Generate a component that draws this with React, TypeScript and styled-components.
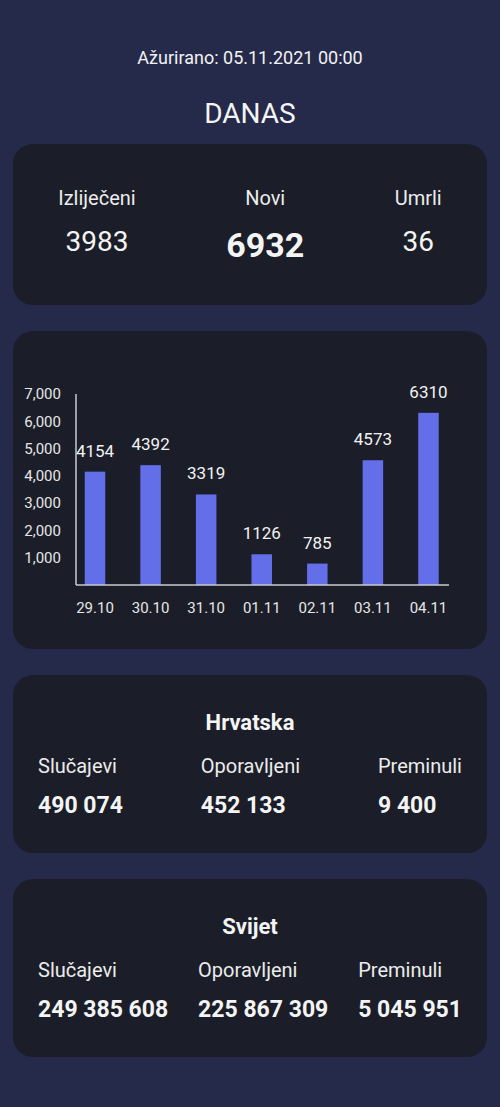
import React from "react";
import styled, { createGlobalStyle } from "styled-components";

const GlobalStyle = createGlobalStyle`
  html, body {
    margin: 0;
    padding: 0;
    background: #262a4a;
  }
  body {
    font-family: Roboto, "Noto Sans", "Liberation Sans", sans-serif;
    color: #f2f2f2;
  }
`;

const daily = [
  { date: "29.10", value: 4154 },
  { date: "30.10", value: 4392 },
  { date: "31.10", value: 3319 },
  { date: "01.11", value: 1126 },
  { date: "02.11", value: 785 },
  { date: "03.11", value: 4573 },
  { date: "04.11", value: 6310 },
];

const ticks = [1000, 2000, 3000, 4000, 5000, 6000, 7000];

const App: React.FC = () => {
  return (
    <>
      <GlobalStyle />
      <Page>
        <Updated>Ažurirano: 05.11.2021 00:00</Updated>
        <Heading>DANAS</Heading>
        <Cards>
          <Card $padding="43px 0 39px">
            <StatRow $justify="space-around">
              <StatColumn $align="center">
                <TodayLabel>Izliječeni</TodayLabel>
                <TodayValue>3983</TodayValue>
              </StatColumn>
              <StatColumn $align="center">
                <TodayLabel>Novi</TodayLabel>
                <TodayValue $big>6932</TodayValue>
              </StatColumn>
              <StatColumn $align="center">
                <TodayLabel>Umrli</TodayLabel>
                <TodayValue>36</TodayValue>
              </StatColumn>
            </StatRow>
          </Card>

          <Card $padding="0">
            <DailyChart />
          </Card>

          <TotalsCard
            title="Hrvatska"
            cases="490 074"
            recovered="452 133"
            deaths="9 400"
          />
          <TotalsCard
            title="Svijet"
            cases="249 385 608"
            recovered="225 867 309"
            deaths="5 045 951"
          />
        </Cards>
      </Page>
    </>
  );
};

const DailyChart: React.FC = () => {
  const axisX = 63;
  const axisTop = 63;
  const axisBottom = 254;
  const axisRight = 436;
  const scale = (axisBottom - axisTop) / 7000;
  const firstCenter = 82;
  const step = 55.58;
  const barWidth = 20.5;

  return (
    <ChartSvg viewBox="0 0 474 318" width="100%" height="318">
      {ticks.map((t) => (
        <text
          key={t}
          x={48}
          y={axisBottom - t * scale + 5.3}
          textAnchor="end"
          fontSize="15"
          fill="#e6e6e6"
        >
          {t.toLocaleString("en-US")}
        </text>
      ))}
      {daily.map((d, i) => {
        const cx = firstCenter + i * step;
        const top = axisBottom - d.value * scale;
        return (
          <g key={d.date}>
            <rect
              x={cx - barWidth / 2}
              y={top}
              width={barWidth}
              height={axisBottom - top}
              fill="#636fe8"
            />
            <text
              x={cx}
              y={top - 21 + 6}
              textAnchor="middle"
              fontSize="17"
              fill="#f2f2f2"
            >
              {d.value}
            </text>
            <text
              x={cx}
              y={281.5}
              textAnchor="middle"
              fontSize="15"
              fill="#e6e6e6"
            >
              {d.date}
            </text>
          </g>
        );
      })}
      <line
        x1={axisX}
        y1={axisTop}
        x2={axisX}
        y2={axisBottom}
        stroke="#c9c9cf"
        strokeWidth="1.5"
      />
      <line
        x1={axisX}
        y1={axisBottom}
        x2={axisRight}
        y2={axisBottom}
        stroke="#c9c9cf"
        strokeWidth="1.5"
      />
    </ChartSvg>
  );
};

interface TotalsProps {
  title: string;
  cases: string;
  recovered: string;
  deaths: string;
}

const TotalsCard: React.FC<TotalsProps> = ({ title, cases, recovered, deaths }) => (
  <Card $padding="35px 25px 33px">
    <CardTitle>{title}</CardTitle>
    <StatRow $justify="space-between">
      <StatColumn $align="flex-start">
        <TotalLabel>Slučajevi</TotalLabel>
        <TotalValue>{cases}</TotalValue>
      </StatColumn>
      <StatColumn $align="flex-start">
        <TotalLabel>Oporavljeni</TotalLabel>
        <TotalValue>{recovered}</TotalValue>
      </StatColumn>
      <StatColumn $align="flex-start">
        <TotalLabel>Preminuli</TotalLabel>
        <TotalValue>{deaths}</TotalValue>
      </StatColumn>
    </StatRow>
  </Card>
);

const Page = styled.div`
  min-height: 1107px;
  padding: 47px 13px 50px;
  box-sizing: border-box;
  display: flex;
  flex-direction: column;
  align-items: stretch;
`;

const Updated = styled.div`
  text-align: center;
  font-size: 18px;
  line-height: 1.17;
  color: #f2f2f2;
`;

const Heading = styled.h1`
  margin: 30px 0 13px;
  text-align: center;
  font-size: 28px;
  line-height: 1.17;
  font-weight: 400;
  color: #f4f4f4;
`;

const Cards = styled.div`
  display: flex;
  flex-direction: column;
  gap: 26px;
`;

const Card = styled.section<{ $padding: string }>`
  background: #1b1e28;
  border-radius: 20px;
  padding: ${(p) => p.$padding};
  overflow: hidden;
`;

const StatRow = styled.div<{ $justify: string }>`
  display: flex;
  justify-content: ${(p) => p.$justify};
  align-items: flex-start;
`;

const StatColumn = styled.div<{ $align: string }>`
  display: flex;
  flex-direction: column;
  align-items: ${(p) => p.$align};
`;

const TodayLabel = styled.div`
  font-size: 20px;
  line-height: 1.17;
  color: #ececec;
`;

const TodayValue = styled.div<{ $big?: boolean }>`
  margin-top: 16px;
  font-size: ${(p) => (p.$big ? "34px" : "28px")};
  font-weight: ${(p) => (p.$big ? 700 : 400)};
  line-height: 1.17;
  color: #f4f4f4;
`;

const CardTitle = styled.h2`
  margin: 0 0 19px;
  text-align: center;
  font-size: 22px;
  font-weight: 700;
  line-height: 1.17;
  color: #f4f4f4;
`;

const TotalLabel = styled.div`
  font-size: 20px;
  line-height: 1.17;
  color: #ececec;
`;

const TotalValue = styled.div`
  margin-top: 15px;
  font-size: 23px;
  font-weight: 700;
  line-height: 1.17;
  color: #f4f4f4;
`;

const ChartSvg = styled.svg`
  display: block;
  font-family: Roboto, "Noto Sans", "Liberation Sans", sans-serif;
`;

export default App;
